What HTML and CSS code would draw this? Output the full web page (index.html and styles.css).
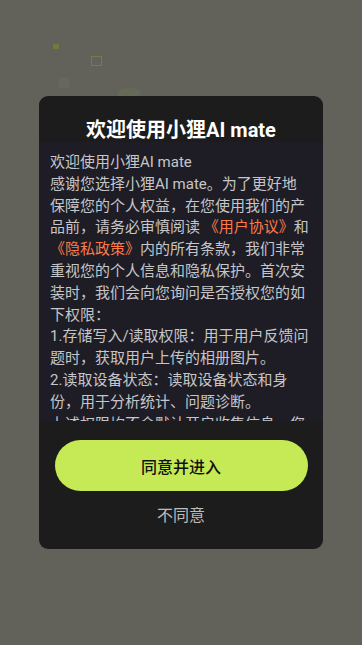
FILE: index.html
```html
<!DOCTYPE html>
<html lang="zh-CN">
<head>
  <meta charset="UTF-8">
  <meta name="viewport" content="width=device-width, initial-scale=1.0">
  <title>小狸AI mate</title>
  <link rel="stylesheet" href="styles.css">
</head>
<body>

  <!-- Background decorations behind the dim layer -->
  <div class="deco deco-fill"></div>
  <div class="deco deco-outline"></div>
  <div class="deco deco-faint"></div>
  <div class="deco deco-blob"></div>

  <!-- Privacy Dialog -->
  <div class="dialog">
    <h2 class="dialog-title">欢迎使用小狸AI mate</h2>

    <div class="dialog-body">
      <p>欢迎使用小狸AI mate</p>
      <p>感谢您选择小狸AI mate。为了更好地保障您的个人权益，在您使用我们的产品前，请务必审慎阅读 <a href="#" class="link">《用户协议》</a>和<a href="#" class="link">《隐私政策》</a>内的所有条款，我们非常重视您的个人信息和隐私保护。首次安装时，我们会向您询问是否授权您的如下权限：</p>
      <p>1.存储写入/读取权限：用于用户反馈问题时，获取用户上传的相册图片。</p>
      <p>2.读取设备状态：读取设备状态和身份，用于分析统计、问题诊断。</p>
      <p>上述权限均不会默认开启收集信息，您可以在系统设置中随时关闭相关权限。</p>
    </div>

    <div class="dialog-footer">
      <button class="btn-agree">同意并进入</button>
      <button class="btn-refuse">不同意</button>
    </div>
  </div>

</body>
</html>
```

FILE: styles.css
```css
/* General Styles */
* {
  margin: 0;
  padding: 0;
  box-sizing: border-box;
}

body {
  font-family: Roboto, "Noto Sans CJK SC", sans-serif;
  background-color: #62625a;
  height: 100vh;
  display: flex;
  justify-content: center;
  align-items: center;
  position: relative;
  overflow: hidden;
}

/* Decorations */
.deco {
  position: absolute;
}

.deco-fill {
  left: 53px;
  top: 44px;
  width: 6px;
  height: 5px;
  background-color: #6f7d3a;
}

.deco-outline {
  left: 91px;
  top: 56px;
  width: 11px;
  height: 10px;
  border: 1px solid #737c4c;
}

.deco-faint {
  left: 59px;
  top: 78px;
  width: 10px;
  height: 10px;
  background-color: #65685a;
}

.deco-blob {
  left: 118px;
  top: 88px;
  width: 22px;
  height: 8px;
  border-radius: 50% 50% 0 0;
  background-color: #656958;
}

/* Dialog */
.dialog {
  width: 284px;
  height: 453px;
  background-color: #1c1c1c;
  border-radius: 9px;
  overflow: hidden;
  display: flex;
  flex-direction: column;
}

.dialog-title {
  height: 46px;
  padding-top: 21px;
  text-align: center;
  color: #fff;
  font-size: 20px;
  font-weight: 700;
  line-height: 26px;
}

.dialog-body {
  height: 279px;
  overflow: hidden;
  background-color: #1e1d26;
  padding: 10px 13px 0 11px;
  color: #c6c6c8;
  font-size: 15px;
  line-height: 21.8px;
}

.link {
  color: #ff7a48;
  text-decoration: none;
}

/* Footer buttons */
.dialog-footer {
  flex: 1;
  display: flex;
  flex-direction: column;
  align-items: center;
  padding-top: 19px;
}

.btn-agree {
  width: 253px;
  height: 51px;
  border: none;
  border-radius: 26px;
  background-color: #c5ea55;
  color: #111;
  font-family: inherit;
  font-size: 16px;
  font-weight: 500;
}

.btn-refuse {
  margin-top: 14px;
  border: none;
  background: none;
  color: #bdbdbd;
  font-family: inherit;
  font-size: 16px;
  line-height: 22px;
}
```
